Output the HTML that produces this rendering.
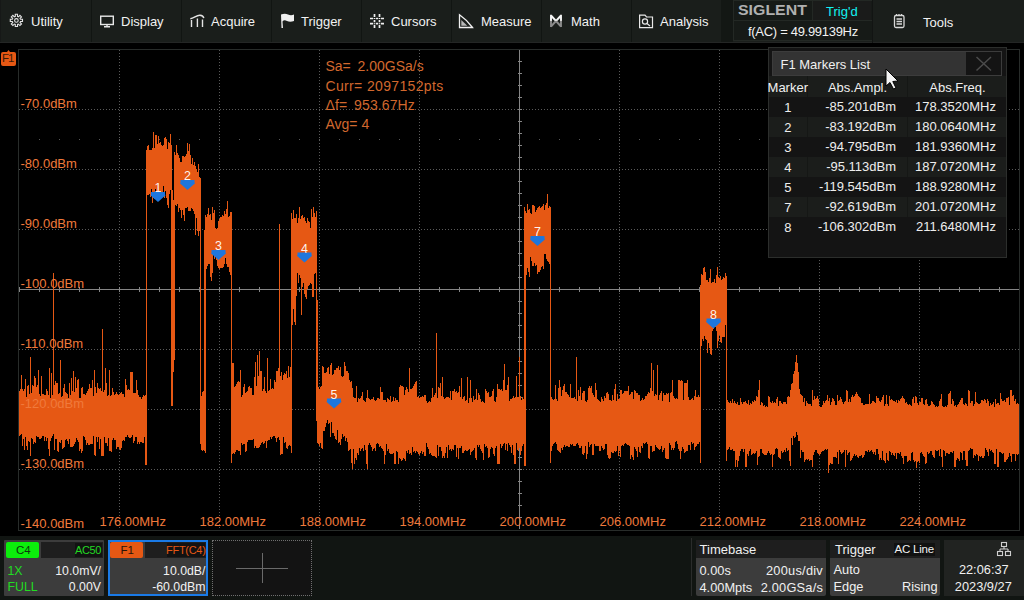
<!DOCTYPE html>
<html><head><meta charset="utf-8">
<style>
html,body{margin:0;padding:0;width:1024px;height:600px;overflow:hidden;background:#000;font-family:"Liberation Sans",sans-serif;}
.a{position:absolute;white-space:nowrap;}
#top{position:absolute;left:0;top:0;width:1024px;height:43px;background:#1a1e1b;}
.sep{position:absolute;top:0;width:1px;height:43px;background:#111512;}
.mi{position:absolute;top:11.5px;font-size:13px;color:#f2f2f2;line-height:20px;}
.ic{position:absolute;top:0;left:0;}
.yl{position:absolute;left:20px;font-size:13px;line-height:13px;color:#f07a3c;}
.xl{position:absolute;top:514px;font-size:13px;line-height:13px;color:#f07a3c;}
.info{position:absolute;left:325px;font-size:13.5px;line-height:14px;color:#d96b30;}
#panel{position:absolute;left:768px;top:47px;width:237px;height:209px;background:#141414;border:1px solid #2c2e2c;}
.row{position:absolute;left:0;width:237px;height:20px;font-size:13px;color:#eeeeee;line-height:20px;}
.c1{position:absolute;left:0;width:39px;text-align:center;}
.c2{position:absolute;left:40px;width:88px;text-align:right;}
.c3{position:absolute;left:140px;width:88px;text-align:right;}
.bb{position:absolute;background:#3c3c3c;}
.bt{position:absolute;font-size:13px;line-height:16px;color:#f0f0f0;}
</style></head><body>
<!-- top menu bar -->
<div id="top">
  <div class="sep" style="left:0;background:#161817"></div>
  <div class="sep" style="left:91px"></div>
  <div class="sep" style="left:181px"></div>
  <div class="sep" style="left:271px"></div>
  <div class="sep" style="left:361px"></div>
  <div class="sep" style="left:451px"></div>
  <div class="sep" style="left:541px"></div>
  <div class="sep" style="left:631px"></div>
  <div class="a" style="left:721px;top:0;width:12px;height:43px;background:#131714"></div>
  <div class="a" style="left:0;top:42px;width:1024px;height:1px;background:#242625"></div>

  <div class="mi" style="left:31px">Utility</div>
  <div class="mi" style="left:121px">Display</div>
  <div class="mi" style="left:211px">Acquire</div>
  <div class="mi" style="left:301px">Trigger</div>
  <div class="mi" style="left:391px">Cursors</div>
  <div class="mi" style="left:481px">Measure</div>
  <div class="mi" style="left:571px">Math</div>
  <div class="mi" style="left:660px">Analysis</div>
  <div class="mi" style="left:923px;top:12.5px">Tools</div>

  <svg class="ic" width="1024" height="43">
    <!-- gear -->
    <g fill="none" stroke="#e4e4e4" stroke-width="1.1" stroke-linejoin="miter">
      <path d="M15.31,16.34 L15.27,14.30 L17.53,14.30 L17.49,16.34 L18.50,16.76 L19.91,15.29 L21.51,16.89 L20.04,18.30 L20.46,19.31 L22.50,19.27 L22.50,21.53 L20.46,21.49 L20.04,22.50 L21.51,23.91 L19.91,25.51 L18.50,24.04 L17.49,24.46 L17.53,26.50 L15.27,26.50 L15.31,24.46 L14.30,24.04 L12.89,25.51 L11.29,23.91 L12.76,22.50 L12.34,21.49 L10.30,21.53 L10.30,19.27 L12.34,19.31 L12.76,18.30 L11.29,16.89 L12.89,15.29 L14.30,16.76 Z"/>
      <circle cx="16.4" cy="20.4" r="1.8"/>
    </g>
    <!-- monitor -->
    <g fill="none" stroke="#e8e8e8" stroke-width="1.4">
      <rect x="100.7" y="16.2" width="12.6" height="8.3"/>
      <path d="M107 25 V26.5 M104 26.8 H110"/>
    </g>
    <!-- acquire -->
    <g fill="none" stroke="#e4e4e4" stroke-width="1.4">
      <path d="M190.3 18.8 C194 18.5 196.5 15 200 15.3 C202 15.5 203.5 16.8 203.8 18.2"/>
      <path d="M191.5 20 V27 M197.4 18.5 V27 M202.5 19.5 V27"/>
    </g>
    <!-- flag -->
    <path d="M281 14.5 Q285 13 288 14.5 T294 14.5 L294 21 Q290 22.5 287 21 T282.5 21.5 L283 28 L281.5 28 Z" fill="#f0f0f0"/>
    <!-- cursors hash -->
    <g stroke="#f0f0f0" stroke-width="1.7">
      <path d="M374.5 14 V17 M374.5 18 V19 M374.5 20 V22.3 M374.5 23.2 V24.2 M374.5 25 V28 M379.5 14 V17 M379.5 18 V19 M379.5 20 V22.3 M379.5 23.2 V24.2 M379.5 25 V28"/>
      <path d="M370 18.5 H373 M376 18.5 H378 M381 18.5 H384 M370 23.6 H373 M376 23.6 H378 M381 23.6 H384"/>
    </g>
    <!-- measure triangle -->
    <g fill="none" stroke="#f0f0f0" stroke-width="1.3">
      <path d="M459.5 14.8 Q467 20 472.5 27.5 H459.5 Z"/>
      <path d="M461.3 20 V25.8 H467.3 Z" fill="#b8b8b8" stroke="none"/>
    </g>
    <!-- math -->
    <defs><linearGradient id="mg" x1="0" y1="0" x2="0" y2="1"><stop offset="0.45" stop-color="#f4f4f4"/><stop offset="0.55" stop-color="#8a8a8a"/></linearGradient></defs>
    <g stroke="url(#mg)" stroke-width="1.9" fill="none" stroke-linejoin="miter">
      <path d="M551 14.8 V27 M561 14.8 V27 M551 15.5 L556 21 L561 15.5 M551 26.5 L556 21 L561 26.5"/>
    </g>
    <!-- analysis -->
    <g fill="none" stroke="#e8e8e8" stroke-width="1.2">
      <path d="M639.6 15.2 H645 L646.5 17 H652.5 V27.7 H639.6 Z"/>
      <circle cx="645" cy="21.5" r="2.6"/>
      <path d="M647 23.5 L650 26"/>
    </g>
    <!-- tools notepad -->
    <g fill="none" stroke="#d8d8d8" stroke-width="1.3">
      <rect x="894.5" y="15.5" width="9.5" height="12" rx="1.5"/>
      <path d="M896.5 19 H902 M896.5 21.5 H902 M896.5 24 H902 M896.5 14 V16 M899 14 V16 M901.5 14 V16"/>
    </g>
  </svg>

  <!-- SIGLENT box -->
  <div class="a" style="left:733px;top:0px;width:140px;height:41px;background:#161a17;border:1px solid #232824;box-sizing:border-box"></div>
  <div class="a" style="left:733px;top:20px;width:139px;height:1px;background:#232824"></div>
  <div class="a" style="left:812px;top:0px;width:1px;height:20px;background:#232824"></div>
  <div class="a" style="left:738px;top:1px;font-size:15px;font-weight:bold;color:#b0b0b0;letter-spacing:0px;line-height:17px;transform:scaleX(1.06);transform-origin:0 0">SIGLENT</div>
  <div class="a" style="left:813px;top:1px;width:58px;height:19px;background:#1a1b1a"></div><div class="a" style="left:826px;top:5px;font-size:13px;color:#12f2f2;line-height:14px">Trig'd</div>
  <div class="a" style="left:748px;top:24.7px;font-size:13px;letter-spacing:-0.3px;color:#f2f2f2;line-height:14px">f(AC) = 49.99139Hz</div>
  <div class="a" style="left:872px;top:0;width:1px;height:43px;background:#121413"></div>
</div>

<!-- plot -->
<svg class="a" style="left:0;top:0" width="1024" height="600">
<line x1="119.5" y1="50" x2="119.5" y2="529" stroke="#5a5a5a" stroke-width="1" stroke-dasharray="1 2" stroke-dashoffset="0"/>
<line x1="219.5" y1="50" x2="219.5" y2="529" stroke="#5a5a5a" stroke-width="1" stroke-dasharray="1 2" stroke-dashoffset="0"/>
<line x1="319.5" y1="50" x2="319.5" y2="529" stroke="#5a5a5a" stroke-width="1" stroke-dasharray="1 2" stroke-dashoffset="0"/>
<line x1="419.5" y1="50" x2="419.5" y2="529" stroke="#5a5a5a" stroke-width="1" stroke-dasharray="1 2" stroke-dashoffset="0"/>
<line x1="619.5" y1="50" x2="619.5" y2="529" stroke="#5a5a5a" stroke-width="1" stroke-dasharray="1 2" stroke-dashoffset="0"/>
<line x1="719.5" y1="50" x2="719.5" y2="529" stroke="#5a5a5a" stroke-width="1" stroke-dasharray="1 2" stroke-dashoffset="0"/>
<line x1="819.5" y1="50" x2="819.5" y2="529" stroke="#5a5a5a" stroke-width="1" stroke-dasharray="1 2" stroke-dashoffset="0"/>
<line x1="919.5" y1="50" x2="919.5" y2="529" stroke="#5a5a5a" stroke-width="1" stroke-dasharray="1 2" stroke-dashoffset="0"/>
<line x1="19" y1="109.5" x2="1019" y2="109.5" stroke="#5a5a5a" stroke-width="1" stroke-dasharray="1 2" stroke-dashoffset="-0"/>
<line x1="19" y1="169.5" x2="1019" y2="169.5" stroke="#5a5a5a" stroke-width="1" stroke-dasharray="1 2" stroke-dashoffset="-0"/>
<line x1="19" y1="229.5" x2="1019" y2="229.5" stroke="#5a5a5a" stroke-width="1" stroke-dasharray="1 2" stroke-dashoffset="-0"/>
<line x1="19" y1="349.5" x2="1019" y2="349.5" stroke="#5a5a5a" stroke-width="1" stroke-dasharray="1 2" stroke-dashoffset="-0"/>
<line x1="19" y1="409.5" x2="1019" y2="409.5" stroke="#5a5a5a" stroke-width="1" stroke-dasharray="1 2" stroke-dashoffset="-0"/>
<line x1="19" y1="469.5" x2="1019" y2="469.5" stroke="#5a5a5a" stroke-width="1" stroke-dasharray="1 2" stroke-dashoffset="-0"/>
<line x1="19" y1="289.5" x2="1019" y2="289.5" stroke="#858585" stroke-width="1"/>
<line x1="519.5" y1="50" x2="519.5" y2="529" stroke="#858585" stroke-width="1"/>
<path d="M19.5 287V292M39.5 287V292M59.5 287V292M79.5 287V292M99.5 287V292M119.5 287V292M139.5 287V292M159.5 287V292M179.5 287V292M199.5 287V292M219.5 287V292M239.5 287V292M259.5 287V292M279.5 287V292M299.5 287V292M319.5 287V292M339.5 287V292M359.5 287V292M379.5 287V292M399.5 287V292M419.5 287V292M439.5 287V292M459.5 287V292M479.5 287V292M499.5 287V292M519.5 287V292M539.5 287V292M559.5 287V292M579.5 287V292M599.5 287V292M619.5 287V292M639.5 287V292M659.5 287V292M679.5 287V292M699.5 287V292M719.5 287V292M739.5 287V292M759.5 287V292M779.5 287V292M799.5 287V292M819.5 287V292M839.5 287V292M859.5 287V292M879.5 287V292M899.5 287V292M919.5 287V292M939.5 287V292M959.5 287V292M979.5 287V292M999.5 287V292M1019.5 287V292M518 61.5H522M518 73.5H522M518 85.5H522M518 97.5H522M518 109.5H522M518 121.5H522M518 133.5H522M518 145.5H522M518 157.5H522M518 169.5H522M518 181.5H522M518 193.5H522M518 205.5H522M518 217.5H522M518 229.5H522M518 241.5H522M518 253.5H522M518 265.5H522M518 277.5H522M518 289.5H522M518 301.5H522M518 313.5H522M518 325.5H522M518 337.5H522M518 349.5H522M518 361.5H522M518 373.5H522M518 385.5H522M518 397.5H522M518 409.5H522M518 421.5H522M518 433.5H522M518 445.5H522M518 457.5H522M518 469.5H522M518 481.5H522M518 493.5H522M518 505.5H522M518 517.5H522" stroke="#858585" stroke-width="1"/>
<path d="M39 139.5h1M59 139.5h1M79 139.5h1M99 139.5h1M119 139.5h1M139 139.5h1M159 139.5h1M179 139.5h1M199 139.5h1M219 139.5h1M239 139.5h1M259 139.5h1M279 139.5h1M299 139.5h1M319 139.5h1M339 139.5h1M359 139.5h1M379 139.5h1M399 139.5h1M419 139.5h1M439 139.5h1M459 139.5h1M479 139.5h1M499 139.5h1M519 139.5h1M539 139.5h1M559 139.5h1M579 139.5h1M599 139.5h1M619 139.5h1M639 139.5h1M659 139.5h1M679 139.5h1M699 139.5h1M719 139.5h1M739 139.5h1M759 139.5h1M779 139.5h1M799 139.5h1M819 139.5h1M839 139.5h1M859 139.5h1M879 139.5h1M899 139.5h1M919 139.5h1M939 139.5h1M959 139.5h1M979 139.5h1M999 139.5h1" stroke="#5a5a5a" stroke-width="1"/>
<rect x="18.5" y="49.5" width="1001" height="481" fill="none" stroke="#282c2a" stroke-width="1"/>
<path d="M19.5 391V436M20.5 389V435M21.5 375V434M22.5 389V446M23.5 391V439M24.5 389V450M25.5 379V437M26.5 397V446M27.5 386V450M28.5 385V441M29.5 394V442M30.5 357V456M31.5 393V438M32.5 385V439M33.5 386V444M34.5 376V442M35.5 378V443M36.5 387V436M37.5 385V437M38.5 370V437M39.5 394V439M40.5 396V439M41.5 376V438M42.5 394V436M43.5 394V436M44.5 395V441M45.5 395V437M46.5 389V441M47.5 391V438M48.5 395V449M49.5 368V456M50.5 398V441M51.5 373V438M52.5 395V436M53.5 273V434M54.5 385V450M55.5 381V439M56.5 383V439M57.5 383V451M58.5 394V452M59.5 393V442M60.5 360V443M61.5 397V440M62.5 396V449M63.5 388V448M64.5 384V447M65.5 392V440M66.5 393V439M67.5 394V441M68.5 398V444M69.5 383V439M70.5 395V447M71.5 378V447M72.5 391V447M73.5 371V446M74.5 392V444M75.5 377V442M76.5 388V438M77.5 380V440M78.5 379V442M79.5 398V451M80.5 398V449M81.5 388V453M82.5 387V451M83.5 394V436M84.5 394V437M85.5 395V440M86.5 393V445M87.5 391V443M88.5 389V445M89.5 384V445M90.5 388V444M91.5 388V444M92.5 380V444M93.5 396V436M94.5 370V455M95.5 387V456M96.5 393V437M97.5 383V442M98.5 388V437M99.5 389V449M100.5 388V439M101.5 391V456M102.5 329V456M103.5 392V456M104.5 390V437M105.5 368V443M106.5 383V443M107.5 396V446M108.5 395V438M109.5 370V451M110.5 396V451M111.5 395V452M112.5 388V440M113.5 392V438M114.5 395V440M115.5 394V440M116.5 392V449M117.5 394V447M118.5 395V447M119.5 394V449M120.5 393V450M121.5 392V448M122.5 394V441M123.5 394V440M124.5 397V441M125.5 379V437M126.5 385V437M127.5 390V435M128.5 389V437M129.5 390V438M130.5 372V438M131.5 372V437M132.5 372V435M133.5 393V443M134.5 393V441M135.5 393V437M136.5 380V437M137.5 390V444M138.5 395V442M139.5 397V444M140.5 397V442M141.5 399V442M142.5 397V443M143.5 395V443M144.5 396V437M145.5 395V465M146.5 150V465M147.5 146V195M148.5 145V195M149.5 150V194M150.5 150V197M151.5 150V189M152.5 148V203M153.5 132V198M154.5 148V199M155.5 135V189M156.5 135V198M157.5 144V198M158.5 136V197M159.5 143V198M160.5 142V199M161.5 145V196M162.5 146V196M163.5 145V186M164.5 138V198M165.5 137V191M166.5 139V198M167.5 149V205M168.5 142V208M169.5 143V194M170.5 134V190M171.5 145V406M172.5 190V406M173.5 200V372M174.5 152V360M175.5 155V205M176.5 145V206M177.5 153V204M178.5 155V212M179.5 158V208M180.5 162V210M181.5 162V218M182.5 156V210M183.5 156V215M184.5 157V221M185.5 156V208M186.5 154V208M187.5 143V207M188.5 151V211M189.5 144V211M190.5 155V211M191.5 164V208M192.5 158V209M193.5 165V211M194.5 162V214M195.5 166V235M196.5 169V218M197.5 172V231M198.5 164V236M199.5 177V231M200.5 178V444M201.5 396V450M202.5 392V451M203.5 391V450M204.5 230V451M205.5 215V453M206.5 217V269M207.5 214V266M208.5 208V264M209.5 215V264M210.5 214V277M211.5 220V281M212.5 207V273M213.5 213V255M214.5 210V259M215.5 228V255M216.5 229V260M217.5 228V266M218.5 221V268M219.5 219V269M220.5 217V268M221.5 217V268M222.5 215V268M223.5 216V267M224.5 211V264M225.5 214V258M226.5 209V264M227.5 201V267M228.5 217V267M229.5 216V272M230.5 212V275M231.5 212V463M232.5 363V454M233.5 363V453M234.5 387V454M235.5 386V452M236.5 384V450M237.5 382V450M238.5 381V451M239.5 382V451M240.5 370V455M241.5 397V443M242.5 395V445M243.5 387V444M244.5 384V444M245.5 393V452M246.5 392V451M247.5 391V442M248.5 387V440M249.5 386V440M250.5 388V440M251.5 388V440M252.5 395V440M253.5 395V439M254.5 377V448M255.5 362V446M256.5 386V448M257.5 355V448M258.5 376V448M259.5 351V447M260.5 371V445M261.5 371V443M262.5 391V442M263.5 389V444M264.5 377V443M265.5 391V441M266.5 393V448M267.5 358V441M268.5 391V440M269.5 390V440M270.5 379V437M271.5 389V439M272.5 388V437M273.5 389V436M274.5 380V436M275.5 382V438M276.5 371V442M277.5 371V438M278.5 368V437M279.5 224V440M280.5 376V455M281.5 372V454M282.5 380V454M283.5 375V437M284.5 373V443M285.5 374V442M286.5 371V448M287.5 378V449M288.5 366V446M289.5 377V445M290.5 367V446M291.5 213V453M292.5 219V325M293.5 210V309M294.5 218V322M295.5 218V325M296.5 214V296M297.5 223V273M298.5 218V283M299.5 207V275M300.5 219V278M301.5 216V315M302.5 215V287M303.5 218V283M304.5 217V294M305.5 221V297M306.5 223V299M307.5 218V289M308.5 221V286M309.5 222V285M310.5 228V283M311.5 209V284M312.5 217V297M313.5 207V297M314.5 213V274M315.5 217V273M316.5 211V421M317.5 300V443M318.5 387V444M319.5 389V446M320.5 387V443M321.5 386V448M322.5 366V449M323.5 367V431M324.5 373V431M325.5 373V427M326.5 372V423M327.5 368V420M328.5 367V424M329.5 374V423M330.5 365V437M331.5 363V422M332.5 375V433M333.5 374V433M334.5 370V436M335.5 370V439M336.5 368V440M337.5 368V430M338.5 366V443M339.5 370V442M340.5 367V445M341.5 376V439M342.5 377V434M343.5 376V437M344.5 362V436M345.5 366V441M346.5 371V438M347.5 371V442M348.5 373V451M349.5 380V450M350.5 382V449M351.5 381V463M352.5 388V469M353.5 397V449M354.5 398V464M355.5 398V458M356.5 386V460M357.5 402V453M358.5 398V455M359.5 399V448M360.5 398V451M361.5 396V449M362.5 392V448M363.5 400V451M364.5 401V445M365.5 402V450M366.5 398V464M367.5 390V469M368.5 398V445M369.5 399V443M370.5 400V445M371.5 399V447M372.5 399V451M373.5 397V449M374.5 400V448M375.5 401V451M376.5 400V444M377.5 398V443M378.5 398V444M379.5 399V447M380.5 387V446M381.5 392V448M382.5 392V449M383.5 400V451M384.5 400V464M385.5 400V455M386.5 402V444M387.5 398V451M388.5 399V449M389.5 400V453M390.5 396V454M391.5 402V454M392.5 401V454M393.5 397V453M394.5 401V464M395.5 398V464M396.5 400V451M397.5 400V452M398.5 402V464M399.5 387V458M400.5 385V459M401.5 386V461M402.5 386V460M403.5 387V458M404.5 395V459M405.5 390V461M406.5 387V451M407.5 389V453M408.5 392V450M409.5 368V454M410.5 389V453M411.5 389V455M412.5 388V447M413.5 386V452M414.5 384V451M415.5 382V453M416.5 381V451M417.5 397V452M418.5 396V454M419.5 398V455M420.5 397V453M421.5 397V451M422.5 396V454M423.5 397V452M424.5 395V456M425.5 395V456M426.5 401V443M427.5 403V447M428.5 402V449M429.5 401V454M430.5 402V453M431.5 398V455M432.5 388V456M433.5 397V456M434.5 395V456M435.5 393V457M436.5 333V458M437.5 398V445M438.5 387V456M439.5 388V447M440.5 383V447M441.5 396V451M442.5 377V458M443.5 397V456M444.5 399V458M445.5 398V453M446.5 397V447M447.5 397V458M448.5 397V445M449.5 398V450M450.5 391V449M451.5 400V451M452.5 391V449M453.5 391V450M454.5 389V445M455.5 392V445M456.5 391V457M457.5 393V448M458.5 392V459M459.5 386V448M460.5 397V448M461.5 378V446M462.5 399V453M463.5 397V453M464.5 396V451M465.5 401V450M466.5 400V451M467.5 377V451M468.5 403V450M469.5 398V449M470.5 380V455M471.5 398V452M472.5 402V451M473.5 396V450M474.5 400V448M475.5 399V458M476.5 389V460M477.5 400V445M478.5 393V447M479.5 395V445M480.5 399V449M481.5 402V451M482.5 401V453M483.5 402V460M484.5 403V444M485.5 389V447M486.5 391V446M487.5 393V448M488.5 392V458M489.5 397V457M490.5 397V449M491.5 396V447M492.5 391V448M493.5 389V454M494.5 401V456M495.5 402V448M496.5 397V446M497.5 384V464M498.5 389V464M499.5 389V464M500.5 390V444M501.5 389V448M502.5 391V446M503.5 380V444M504.5 364V443M505.5 390V450M506.5 390V444M507.5 385V451M508.5 377V443M509.5 401V445M510.5 399V447M511.5 399V453M512.5 398V445M513.5 396V455M514.5 398V464M515.5 397V464M516.5 376V443M517.5 397V450M518.5 397V451M519.5 357V448M520.5 396V455M521.5 400V451M522.5 397V446M523.5 399V444M524.5 207V466M525.5 211V466M526.5 213V275M527.5 204V268M528.5 210V272M529.5 209V277M530.5 213V257M531.5 214V261M532.5 205V266M533.5 205V266M534.5 206V263M535.5 212V266M536.5 210V265M537.5 208V274M538.5 207V272M539.5 206V272M540.5 208V270M541.5 207V267M542.5 206V266M543.5 204V269M544.5 210V254M545.5 205V254M546.5 203V259M547.5 194V261M548.5 208V262M549.5 206V264M550.5 207V463M551.5 397V451M552.5 399V446M553.5 400V444M554.5 399V443M555.5 385V442M556.5 399V444M557.5 401V450M558.5 388V451M559.5 380V452M560.5 387V453M561.5 396V448M562.5 390V450M563.5 386V447M564.5 384V445M565.5 392V447M566.5 392V446M567.5 394V446M568.5 395V447M569.5 397V447M570.5 384V444M571.5 398V445M572.5 398V444M573.5 398V446M574.5 397V446M575.5 399V446M576.5 357V444M577.5 401V443M578.5 390V445M579.5 396V448M580.5 387V448M581.5 400V446M582.5 393V454M583.5 391V455M584.5 391V453M585.5 401V446M586.5 402V459M587.5 400V454M588.5 388V442M589.5 386V447M590.5 388V445M591.5 386V444M592.5 393V455M593.5 395V455M594.5 397V444M595.5 383V446M596.5 390V446M597.5 399V446M598.5 400V446M599.5 401V451M600.5 402V451M601.5 397V446M602.5 399V448M603.5 401V450M604.5 396V449M605.5 398V444M606.5 393V444M607.5 392V455M608.5 394V458M609.5 400V459M610.5 400V458M611.5 401V452M612.5 395V453M613.5 400V453M614.5 389V451M615.5 384V452M616.5 401V451M617.5 394V446M618.5 399V456M619.5 399V451M620.5 390V457M621.5 390V446M622.5 394V445M623.5 393V446M624.5 391V444M625.5 391V443M626.5 391V444M627.5 391V445M628.5 386V445M629.5 395V446M630.5 394V459M631.5 392V455M632.5 392V457M633.5 399V460M634.5 390V447M635.5 391V449M636.5 393V451M637.5 393V457M638.5 395V447M639.5 395V452M640.5 401V453M641.5 400V446M642.5 398V448M643.5 400V443M644.5 399V444M645.5 396V443M646.5 396V442M647.5 394V444M648.5 392V458M649.5 393V459M650.5 388V446M651.5 363V446M652.5 391V452M653.5 370V451M654.5 396V451M655.5 394V445M656.5 395V447M657.5 365V448M658.5 400V449M659.5 395V450M660.5 393V449M661.5 391V446M662.5 401V452M663.5 393V450M664.5 395V448M665.5 395V458M666.5 393V459M667.5 394V459M668.5 393V459M669.5 402V443M670.5 393V445M671.5 392V450M672.5 380V448M673.5 396V450M674.5 398V448M675.5 399V442M676.5 398V441M677.5 399V444M678.5 380V449M679.5 380V451M680.5 381V459M681.5 380V451M682.5 381V447M683.5 400V449M684.5 383V453M685.5 383V452M686.5 383V451M687.5 380V451M688.5 397V445M689.5 400V445M690.5 400V450M691.5 399V442M692.5 398V444M693.5 400V443M694.5 396V450M695.5 390V447M696.5 397V446M697.5 397V444M698.5 395V444M699.5 397V442M700.5 285V463M701.5 274V346M702.5 275V339M703.5 268V341M704.5 267V336M705.5 272V339M706.5 280V340M707.5 280V353M708.5 282V343M709.5 278V348M710.5 269V354M711.5 283V355M712.5 282V331M713.5 282V329M714.5 279V323M715.5 283V327M716.5 275V331M717.5 267V348M718.5 277V341M719.5 278V335M720.5 276V342M721.5 280V343M722.5 279V337M723.5 277V337M724.5 278V337M725.5 273V325M726.5 276V461M727.5 400V450M728.5 402V449M729.5 403V447M730.5 401V450M731.5 403V450M732.5 399V449M733.5 403V451M734.5 401V451M735.5 403V467M736.5 404V460M737.5 402V467M738.5 405V461M739.5 405V456M740.5 398V451M741.5 402V449M742.5 404V449M743.5 402V452M744.5 402V449M745.5 401V467M746.5 403V467M747.5 404V454M748.5 400V456M749.5 405V451M750.5 403V449M751.5 404V455M752.5 401V454M753.5 402V453M754.5 400V454M755.5 401V453M756.5 396V451M757.5 397V465M758.5 390V457M759.5 380V456M760.5 405V449M761.5 402V449M762.5 403V453M763.5 406V454M764.5 405V455M765.5 407V455M766.5 406V455M767.5 407V453M768.5 396V451M769.5 397V453M770.5 402V455M771.5 403V454M772.5 401V467M773.5 403V455M774.5 402V454M775.5 403V449M776.5 399V448M777.5 397V449M778.5 406V457M779.5 401V458M780.5 401V459M781.5 403V451M782.5 404V453M783.5 402V452M784.5 402V450M785.5 402V452M786.5 404V448M787.5 397V451M788.5 396V450M789.5 397V461M790.5 390V466M791.5 384V438M792.5 383V445M793.5 374V436M794.5 371V438M795.5 362V437M796.5 355V432M797.5 363V435M798.5 372V441M799.5 389V441M800.5 394V458M801.5 395V450M802.5 396V452M803.5 402V452M804.5 398V462M805.5 406V460M806.5 401V459M807.5 403V460M808.5 404V459M809.5 404V461M810.5 404V460M811.5 406V460M812.5 390V467M813.5 400V455M814.5 396V452M815.5 399V450M816.5 398V450M817.5 396V453M818.5 399V454M819.5 406V455M820.5 407V454M821.5 407V452M822.5 405V451M823.5 401V451M824.5 403V450M825.5 401V449M826.5 400V450M827.5 395V449M828.5 401V473M829.5 398V465M830.5 405V463M831.5 402V464M832.5 398V464M833.5 399V457M834.5 401V457M835.5 405V457M836.5 405V458M837.5 395V452M838.5 401V464M839.5 400V450M840.5 397V452M841.5 399V454M842.5 402V453M843.5 404V452M844.5 402V450M845.5 401V467M846.5 390V450M847.5 391V455M848.5 402V453M849.5 399V452M850.5 402V461M851.5 397V460M852.5 395V458M853.5 397V456M854.5 396V454M855.5 394V456M856.5 392V455M857.5 394V457M858.5 396V458M859.5 397V456M860.5 398V456M861.5 403V455M862.5 403V458M863.5 405V457M864.5 405V455M865.5 404V451M866.5 404V451M867.5 404V452M868.5 404V450M869.5 394V452M870.5 404V451M871.5 403V450M872.5 401V452M873.5 401V454M874.5 402V452M875.5 403V455M876.5 396V449M877.5 398V449M878.5 398V454M879.5 401V460M880.5 402V458M881.5 400V460M882.5 397V451M883.5 395V460M884.5 406V461M885.5 404V463M886.5 395V453M887.5 404V460M888.5 406V461M889.5 396V451M890.5 400V452M891.5 399V455M892.5 400V453M893.5 401V455M894.5 401V456M895.5 402V453M896.5 400V459M897.5 403V453M898.5 400V453M899.5 401V454M900.5 399V452M901.5 398V456M902.5 396V458M903.5 398V464M904.5 399V456M905.5 403V456M906.5 402V456M907.5 404V462M908.5 405V461M909.5 404V460M910.5 405V461M911.5 406V453M912.5 399V452M913.5 397V460M914.5 403V462M915.5 396V461M916.5 397V468M917.5 403V462M918.5 405V461M919.5 402V463M920.5 402V453M921.5 398V452M922.5 398V454M923.5 404V456M924.5 405V457M925.5 400V464M926.5 399V463M927.5 404V452M928.5 406V454M929.5 406V453M930.5 405V451M931.5 401V451M932.5 402V455M933.5 404V457M934.5 405V458M935.5 407V450M936.5 406V451M937.5 407V451M938.5 406V450M939.5 401V456M940.5 399V449M941.5 394V457M942.5 406V467M943.5 407V450M944.5 407V451M945.5 406V456M946.5 407V453M947.5 405V453M948.5 394V454M949.5 393V454M950.5 391V452M951.5 404V452M952.5 399V453M953.5 401V451M954.5 406V467M955.5 405V467M956.5 407V460M957.5 405V458M958.5 404V459M959.5 402V461M960.5 400V452M961.5 398V453M962.5 398V460M963.5 404V451M964.5 405V451M965.5 403V460M966.5 404V466M967.5 406V466M968.5 390V451M969.5 391V450M970.5 403V448M971.5 401V449M972.5 401V449M973.5 406V458M974.5 404V455M975.5 392V456M976.5 402V454M977.5 403V455M978.5 404V461M979.5 404V456M980.5 403V457M981.5 400V456M982.5 400V458M983.5 401V458M984.5 399V456M985.5 400V448M986.5 403V450M987.5 399V452M988.5 401V456M989.5 406V449M990.5 403V451M991.5 405V450M992.5 404V452M993.5 402V453M994.5 407V464M995.5 399V464M996.5 404V449M997.5 403V467M998.5 403V467M999.5 405V452M1000.5 393V452M1001.5 399V453M1002.5 401V454M1003.5 401V453M1004.5 400V462M1005.5 402V462M1006.5 398V460M1007.5 398V459M1008.5 397V457M1009.5 405V453M1010.5 390V456M1011.5 390V462M1012.5 396V454M1013.5 395V454M1014.5 401V454M1015.5 399V461M1016.5 404V454M1017.5 403V455M1018.5 404V454" stroke="#e65814" stroke-width="1" fill="none" shape-rendering="crispEdges"/>
<path d="M151 192H165V194.5L165.6 195.3L158 202L150.4 195.3L151 194.5Z" fill="#1e76dc"/>
<text x="158" y="192" text-anchor="middle" font-size="12.5" fill="#ffffff" fill-opacity="0.95" font-family="Liberation Sans">1</text>
<path d="M180.5 180H194.5V182.5L195.1 183.3L187.5 190L179.9 183.3L180.5 182.5Z" fill="#1e76dc"/>
<text x="187.5" y="180" text-anchor="middle" font-size="12.5" fill="#ffffff" fill-opacity="0.95" font-family="Liberation Sans">2</text>
<path d="M211.5 250H225.5V252.5L226.1 253.3L218.5 260L210.9 253.3L211.5 252.5Z" fill="#1e76dc"/>
<text x="218.5" y="250" text-anchor="middle" font-size="12.5" fill="#ffffff" fill-opacity="0.95" font-family="Liberation Sans">3</text>
<path d="M297.5 252.5H311.5V255.0L312.1 255.8L304.5 262.5L296.9 255.8L297.5 255.0Z" fill="#1e76dc"/>
<text x="304.5" y="252.5" text-anchor="middle" font-size="12.5" fill="#ffffff" fill-opacity="0.95" font-family="Liberation Sans">4</text>
<path d="M327 398.5H341V401.0L341.6 401.8L334 408.5L326.4 401.8L327 401.0Z" fill="#1e76dc"/>
<text x="334" y="398.5" text-anchor="middle" font-size="12.5" fill="#ffffff" fill-opacity="0.95" font-family="Liberation Sans">5</text>
<path d="M530.5 236H544.5V238.5L545.1 239.3L537.5 246L529.9 239.3L530.5 238.5Z" fill="#1e76dc"/>
<text x="537.5" y="236" text-anchor="middle" font-size="12.5" fill="#ffffff" fill-opacity="0.95" font-family="Liberation Sans">7</text>
<path d="M706.5 318.5H720.5V321.0L721.1 321.8L713.5 328.5L705.9 321.8L706.5 321.0Z" fill="#1e76dc"/>
<text x="713.5" y="318.5" text-anchor="middle" font-size="12.5" fill="#ffffff" fill-opacity="0.95" font-family="Liberation Sans">8</text>
</svg>

<!-- F1 tag -->
<svg class="a" style="left:0;top:48px" width="20" height="20">
  <path d="M3 4 H7 L8.5 2 L10 4 H14 Q16 4 16 6 V16 Q16 18 14 18 H3 Q1 18 1 16 V6 Q1 4 3 4 Z" fill="#e65814"/>
</svg>
<div class="a" style="left:2px;top:53.3px;font-size:11.5px;line-height:11.5px;letter-spacing:-1px;color:#3a1a08">F1</div>

<div class="a" style="left:20.5px;top:97.00px;font-size:13px;line-height:13px;color:#f07a3c;">-70.0dBm</div>
<div class="a" style="left:20.5px;top:157.00px;font-size:13px;line-height:13px;color:#f07a3c;">-80.0dBm</div>
<div class="a" style="left:20.5px;top:217.00px;font-size:13px;line-height:13px;color:#f07a3c;">-90.0dBm</div>
<div class="a" style="left:20.5px;top:277.00px;font-size:13px;line-height:13px;color:#f07a3c;">-100.0dBm</div>
<div class="a" style="left:20.5px;top:337.00px;font-size:13px;line-height:13px;color:#f07a3c;">-110.0dBm</div>
<div class="a" style="left:20.5px;top:397.00px;font-size:13px;line-height:13px;color:#f07a3c;">-120.0dBm</div>
<div class="a" style="left:20.5px;top:457.00px;font-size:13px;line-height:13px;color:#f07a3c;">-130.0dBm</div>
<div class="a" style="left:20.5px;top:517.00px;font-size:13px;line-height:13px;color:#f07a3c;">-140.0dBm</div>
<div class="a" style="left:99.5px;top:515.00px;font-size:13px;line-height:13px;color:#f07a3c;">176.00MHz</div>
<div class="a" style="left:199.5px;top:515.00px;font-size:13px;line-height:13px;color:#f07a3c;">182.00MHz</div>
<div class="a" style="left:299.5px;top:515.00px;font-size:13px;line-height:13px;color:#f07a3c;">188.00MHz</div>
<div class="a" style="left:399.5px;top:515.00px;font-size:13px;line-height:13px;color:#f07a3c;">194.00MHz</div>
<div class="a" style="left:499.5px;top:515.00px;font-size:13px;line-height:13px;color:#f07a3c;">200.00MHz</div>
<div class="a" style="left:599.5px;top:515.00px;font-size:13px;line-height:13px;color:#f07a3c;">206.00MHz</div>
<div class="a" style="left:699.5px;top:515.00px;font-size:13px;line-height:13px;color:#f07a3c;">212.00MHz</div>
<div class="a" style="left:799.5px;top:515.00px;font-size:13px;line-height:13px;color:#f07a3c;">218.00MHz</div>
<div class="a" style="left:899.5px;top:515.00px;font-size:13px;line-height:13px;color:#f07a3c;">224.00MHz</div>
<div class="a" style="left:325.5px;top:59.15px;font-size:14px;line-height:14px;color:#d2682e;letter-spacing:0.0px">Sa=&thinsp; 2.00GSa/s</div>
<div class="a" style="left:325.5px;top:78.65px;font-size:14px;line-height:14px;color:#d2682e;letter-spacing:0.35px">Curr= 2097152pts</div>
<div class="a" style="left:325.5px;top:97.65px;font-size:14px;line-height:14px;color:#d2682e;letter-spacing:0.1px">&Delta;f=&thinsp; 953.67Hz</div>
<div class="a" style="left:325.5px;top:116.65px;font-size:14px;line-height:14px;color:#d2682e;letter-spacing:0.0px">Avg= 4</div>
<div class="a" style="left:768px;top:47px;width:237px;height:209px;background:#141414;border:1px solid #2c2e2c"></div>
<div class="a" style="left:772px;top:51px;width:228px;height:23px;background:#333333;border:1px solid #3c3c3c"></div>
<div class="a" style="left:966px;top:52px;width:35px;height:23px;background:#141414;"></div>
<svg class="a" style="left:966px;top:52px" width="36" height="23"><path d="M10.5 5 L25 18.5 M25 5 L10.5 18.5" stroke="#4c4c4c" stroke-width="1.5"/></svg>
<div class="a" style="left:780.5px;top:58.00px;font-size:13px;line-height:13px;color:#f0f0f0;">F1 Markers List</div>
<div class="a" style="left:769px;top:76px;width:237px;height:21px;background:#1b1d1b;"></div>
<div class="a" style="left:807px;top:76px;width:1px;height:21px;background:#151715;"></div>
<div class="a" style="left:907px;top:76px;width:1px;height:21px;background:#151715;"></div>
<div class="a" style="left:637.8px;width:300px;text-align:center;top:81.00px;font-size:13px;line-height:13px;color:#f0f0f0;">Marker</div>
<div class="a" style="left:707.5px;width:300px;text-align:center;top:81.00px;font-size:13px;line-height:13px;color:#f0f0f0;">Abs.Ampl.</div>
<div class="a" style="left:807.5px;width:300px;text-align:center;top:81.00px;font-size:13px;line-height:13px;color:#f0f0f0;">Abs.Freq.</div>
<div class="a" style="left:637.8px;width:300px;text-align:center;top:101.00px;font-size:13px;line-height:13px;color:#eeeeee;">1</div>
<div class="a" style="left:596px;width:300px;text-align:right;top:100.20px;font-size:13px;line-height:13px;color:#eeeeee;">-85.201dBm</div>
<div class="a" style="left:696px;width:300px;text-align:right;top:100.20px;font-size:13px;line-height:13px;color:#eeeeee;">178.3520MHz</div>
<div class="a" style="left:769px;top:117px;width:237px;height:20px;background:#1b1d1b;"></div>
<div class="a" style="left:807px;top:117px;width:1px;height:20px;background:#151715;"></div>
<div class="a" style="left:907px;top:117px;width:1px;height:20px;background:#151715;"></div>
<div class="a" style="left:637.8px;width:300px;text-align:center;top:121.00px;font-size:13px;line-height:13px;color:#eeeeee;">2</div>
<div class="a" style="left:596px;width:300px;text-align:right;top:120.20px;font-size:13px;line-height:13px;color:#eeeeee;">-83.192dBm</div>
<div class="a" style="left:696px;width:300px;text-align:right;top:120.20px;font-size:13px;line-height:13px;color:#eeeeee;">180.0640MHz</div>
<div class="a" style="left:637.8px;width:300px;text-align:center;top:141.00px;font-size:13px;line-height:13px;color:#eeeeee;">3</div>
<div class="a" style="left:596px;width:300px;text-align:right;top:140.20px;font-size:13px;line-height:13px;color:#eeeeee;">-94.795dBm</div>
<div class="a" style="left:696px;width:300px;text-align:right;top:140.20px;font-size:13px;line-height:13px;color:#eeeeee;">181.9360MHz</div>
<div class="a" style="left:769px;top:157px;width:237px;height:20px;background:#1b1d1b;"></div>
<div class="a" style="left:807px;top:157px;width:1px;height:20px;background:#151715;"></div>
<div class="a" style="left:907px;top:157px;width:1px;height:20px;background:#151715;"></div>
<div class="a" style="left:637.8px;width:300px;text-align:center;top:161.00px;font-size:13px;line-height:13px;color:#eeeeee;">4</div>
<div class="a" style="left:596px;width:300px;text-align:right;top:160.20px;font-size:13px;line-height:13px;color:#eeeeee;">-95.113dBm</div>
<div class="a" style="left:696px;width:300px;text-align:right;top:160.20px;font-size:13px;line-height:13px;color:#eeeeee;">187.0720MHz</div>
<div class="a" style="left:637.8px;width:300px;text-align:center;top:181.00px;font-size:13px;line-height:13px;color:#eeeeee;">5</div>
<div class="a" style="left:596px;width:300px;text-align:right;top:180.20px;font-size:13px;line-height:13px;color:#eeeeee;">-119.545dBm</div>
<div class="a" style="left:696px;width:300px;text-align:right;top:180.20px;font-size:13px;line-height:13px;color:#eeeeee;">188.9280MHz</div>
<div class="a" style="left:769px;top:197px;width:237px;height:20px;background:#1b1d1b;"></div>
<div class="a" style="left:807px;top:197px;width:1px;height:20px;background:#151715;"></div>
<div class="a" style="left:907px;top:197px;width:1px;height:20px;background:#151715;"></div>
<div class="a" style="left:637.8px;width:300px;text-align:center;top:201.00px;font-size:13px;line-height:13px;color:#eeeeee;">7</div>
<div class="a" style="left:596px;width:300px;text-align:right;top:200.20px;font-size:13px;line-height:13px;color:#eeeeee;">-92.619dBm</div>
<div class="a" style="left:696px;width:300px;text-align:right;top:200.20px;font-size:13px;line-height:13px;color:#eeeeee;">201.0720MHz</div>
<div class="a" style="left:637.8px;width:300px;text-align:center;top:221.00px;font-size:13px;line-height:13px;color:#eeeeee;">8</div>
<div class="a" style="left:596px;width:300px;text-align:right;top:220.20px;font-size:13px;line-height:13px;color:#eeeeee;">-106.302dBm</div>
<div class="a" style="left:696px;width:300px;text-align:right;top:220.20px;font-size:13px;line-height:13px;color:#eeeeee;">211.6480MHz</div>
<!-- cursor -->
<svg class="a" style="left:880px;top:64px" width="24" height="30">
  <path d="M6 5 L6 22 L10 18.5 L13.5 25 L16 24 L12.8 17.5 L18 17 Z" fill="#f4f4f4" stroke="#000" stroke-width="1"/>
</svg>

<div class="a" style="left:0px;top:536px;width:1024px;height:64px;background:#111512;"></div>
<div class="a" style="left:4px;top:540px;width:100px;height:56px;background:#3c3c3c;border-radius:1px"></div>
<div class="a" style="left:6px;top:542px;width:33px;height:16px;background:#0cee0c;border-radius:2px"></div>
<div class="a" style="left:41px;top:542px;width:62px;height:16px;background:#1e1e1e;"></div>
<div class="a" style="left:75px;top:543px;width:27px;height:14px;background:#121212;"></div>
<div class="a" style="left:16px;top:544.57px;font-size:11.5px;line-height:11.5px;color:#0c340c;">C4</div>
<div class="a" style="left:-199px;width:300px;text-align:right;top:544.99px;font-size:11px;line-height:11px;color:#22d822;letter-spacing:-0.4px">AC50</div>
<div class="a" style="left:7.5px;top:564.59px;font-size:12.3px;line-height:12.3px;color:#22dd22;">1X</div>
<div class="a" style="left:-199px;width:300px;text-align:right;top:564.59px;font-size:12.3px;line-height:12.3px;color:#f2f2f2;">10.0mV/</div>
<div class="a" style="left:7.5px;top:581.19px;font-size:12.3px;line-height:12.3px;color:#22dd22;">FULL</div>
<div class="a" style="left:-199px;width:300px;text-align:right;top:581.19px;font-size:12.3px;line-height:12.3px;color:#f2f2f2;">0.00V</div>
<div class="a" style="left:108px;top:540px;width:100px;height:56px;background:#3c3c3c;border:2px solid #1a7ae6;box-sizing:border-box"></div>
<div class="a" style="left:110px;top:542px;width:33px;height:16px;background:#e65814;border-radius:2px"></div>
<div class="a" style="left:145px;top:542px;width:61px;height:16px;background:#1e1e1e;"></div>
<div class="a" style="left:167px;top:543px;width:38px;height:14px;background:#121212;"></div>
<div class="a" style="left:120.4px;top:544.57px;font-size:11.5px;line-height:11.5px;color:#2a1408;">F1</div>
<div class="a" style="left:-94.5px;width:300px;text-align:right;top:544.99px;font-size:11px;line-height:11px;color:#e65814;letter-spacing:-0.3px">FFT(C4)</div>
<div class="a" style="left:-94.5px;width:300px;text-align:right;top:564.59px;font-size:12.3px;line-height:12.3px;color:#f2f2f2;">10.0dB/</div>
<div class="a" style="left:-94.5px;width:300px;text-align:right;top:581.19px;font-size:12.3px;line-height:12.3px;color:#f2f2f2;">-60.0dBm</div>
<div class="a" style="left:212px;top:540px;width:100px;height:56px;background:#131313;border:1px dotted #707070;box-sizing:border-box"></div>
<div class="a" style="left:236px;top:568px;width:52px;height:1px;background:#6a6a6a;"></div>
<div class="a" style="left:262px;top:553px;width:1px;height:30px;background:#6a6a6a;"></div>
<div class="a" style="left:691px;top:538px;width:1px;height:58px;background:#2a2c2b;"></div>
<div class="a" style="left:696px;top:540px;width:130px;height:56px;background:#3c3c3c;border-radius:2px"></div>
<div class="a" style="left:696px;top:540px;width:130px;height:18px;background:#1e1e1e;"></div>
<div class="a" style="left:699.6px;top:543.00px;font-size:13px;line-height:13px;color:#f0f0f0;">Timebase</div>
<div class="a" style="left:699.5px;top:564.96px;font-size:12.8px;line-height:12.8px;color:#f0f0f0;">0.00s</div>
<div class="a" style="left:523px;width:300px;text-align:right;top:564.96px;font-size:12.8px;line-height:12.8px;color:#f0f0f0;letter-spacing:0.25px">200us/div</div>
<div class="a" style="left:699.5px;top:581.66px;font-size:12.8px;line-height:12.8px;color:#f0f0f0;">4.00Mpts</div>
<div class="a" style="left:523px;width:300px;text-align:right;top:581.66px;font-size:12.8px;line-height:12.8px;color:#f0f0f0;letter-spacing:0.2px">2.00GSa/s</div>
<div class="a" style="left:830px;top:540px;width:110px;height:56px;background:#3c3c3c;border-radius:2px"></div>
<div class="a" style="left:830px;top:540px;width:110px;height:18px;background:#1e1e1e;"></div>
<div class="a" style="left:894px;top:543px;width:41px;height:13px;background:#111111;"></div>
<div class="a" style="left:835px;top:543.00px;font-size:13px;line-height:13px;color:#f0f0f0;">Trigger</div>
<div class="a" style="left:634px;width:300px;text-align:right;top:544.27px;font-size:11.5px;line-height:11.5px;color:#f0f0f0;letter-spacing:-0.2px">AC Line</div>
<div class="a" style="left:833.5px;top:564.16px;font-size:12.8px;line-height:12.8px;color:#f0f0f0;">Auto</div>
<div class="a" style="left:833.5px;top:580.96px;font-size:12.8px;line-height:12.8px;color:#f0f0f0;">Edge</div>
<div class="a" style="left:637.5px;width:300px;text-align:right;top:580.96px;font-size:12.8px;line-height:12.8px;color:#f0f0f0;">Rising</div>
<div class="a" style="left:944px;top:540px;width:80px;height:56px;background:#212321;"></div>
<svg class="a" style="left:994px;top:540px" width="20" height="20"><g fill="none" stroke="#cfcfcf" stroke-width="1.1"><rect x="7.5" y="2.5" width="5" height="4"/><rect x="3.5" y="11.5" width="5" height="4"/><rect x="11.5" y="11.5" width="5" height="4"/><path d="M10 6.5 V9 M6 9 H14 M6 9 V11.5 M14 9 V11.5"/></g></svg>
<div class="a" style="left:833.8px;width:300px;text-align:center;top:563.96px;font-size:12.8px;line-height:12.8px;color:#f0f0f0;">22:06:37</div>
<div class="a" style="left:833.3px;width:300px;text-align:center;top:580.96px;font-size:12.8px;line-height:12.8px;color:#f0f0f0;">2023/9/27</div>
</body></html>
